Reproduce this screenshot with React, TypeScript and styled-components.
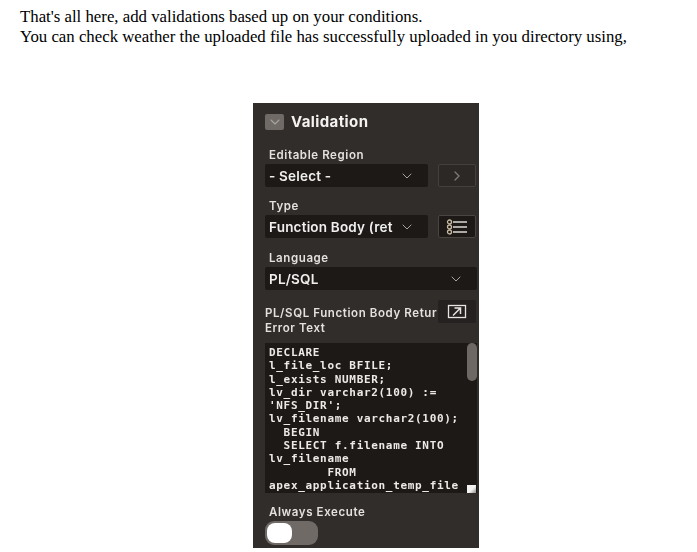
import React from 'react'
import styled, { createGlobalStyle } from 'styled-components'
import { ChevronDown, ChevronRight } from 'lucide-react'

const GlobalStyle = createGlobalStyle`
  html, body {
    margin: 0;
    padding: 0;
    background: #fff;
  }
`

const Page = styled.div`
  width: 697px;
  height: 552px;
  overflow: hidden;
  padding: 7px 0 0 20px;
  box-sizing: border-box;
`

const Intro = styled.p`
  margin: 0;
  font-family: 'Liberation Serif', serif;
  font-size: 16.8px;
  line-height: 20px;
  color: #000;
  white-space: nowrap;
`

const Panel = styled.section`
  width: 226px;
  height: 445px;
  margin: 56px 0 0 233px;
  padding: 11px 2px 0 12px;
  box-sizing: border-box;
  background: #312d2a;
  font-family: 'Inter', sans-serif;
  color: #f1efed;
  filter: blur(0.5px);
`

const Header = styled.header`
  display: flex;
  align-items: center;
  gap: 7px;
  height: 16px;
  margin-bottom: 17px;
`

const Collapse = styled.span`
  display: flex;
  align-items: center;
  justify-content: center;
  width: 19px;
  height: 16px;
  border-radius: 2px;
  background: #6f6a66;
  color: #a8a39f;
`

const Title = styled.h2`
  margin: 0;
  font-size: 15px;
  font-weight: 700;
  line-height: 16px;
  letter-spacing: 0.4px;
  color: #f5f3f1;
`

const Label = styled.label<{ $flush?: boolean }>`
  display: block;
  height: 15px;
  padding-left: ${p => (p.$flush ? 0 : 4)}px;
  font-size: 11.5px;
  font-weight: 600;
  line-height: 17px;
  letter-spacing: 0.6px;
  color: #e4e1de;
`

const Field = styled.div<{ $gap?: number }>`
  margin-bottom: ${p => p.$gap ?? 11}px;
`

const Controls = styled.div`
  display: flex;
  gap: 10px;
  margin-top: 2px;
`

const Select = styled.div<{ $wide?: boolean }>`
  display: flex;
  align-items: center;
  justify-content: space-between;
  width: ${p => (p.$wide ? 212 : 163)}px;
  height: 23px;
  padding: 0 13px 0 4px;
  box-sizing: border-box;
  border-radius: 2px;
  background: #1c1917;
  font-size: 13.5px;
  font-weight: 600;
  letter-spacing: 0.2px;
  color: #f1efed;
  white-space: nowrap;

  svg {
    flex: none;
    color: #a8a39f;
  }
`

const SquareButton = styled.span<{ $dark?: boolean }>`
  display: flex;
  align-items: center;
  justify-content: center;
  width: 38px;
  height: 23px;
  box-sizing: border-box;
  border: 1px solid ${p => (p.$dark ? '#4a4541' : '#45403c')};
  border-radius: 2px;
  background: ${p => (p.$dark ? '#1c1917' : '#2c2825')};
  color: #7d7874;
`

const CodeHeading = styled.div`
  display: flex;
  justify-content: space-between;
  width: 211px;
  height: 43px;
  margin-top: -1px;
`

const CodeLabels = styled.div`
  padding-top: 5px;
  white-space: nowrap;
`

const ExpandButton = styled.span`
  display: flex;
  align-items: center;
  justify-content: center;
  width: 38px;
  height: 23px;
  border-radius: 2px;
  background: #242120;
`

const CodeBox = styled.div`
  position: relative;
  width: 212px;
  height: 150px;
  overflow: hidden;
  background: #1c1917;
  margin-bottom: 11px;
`

const Code = styled.pre`
  margin: 0;
  padding: 3px 0 0 4px;
  font-family: 'DejaVu Sans Mono', monospace;
  font-size: 11px;
  font-weight: 600;
  line-height: 13.3px;
  letter-spacing: 0.68px;
  color: #ece9e6;
`

const ScrollThumb = styled.span`
  position: absolute;
  top: 0;
  right: 0;
  width: 10px;
  height: 38px;
  border-radius: 5px;
  background: #6d6864;
`

const ResizeGrip = styled.span`
  position: absolute;
  right: 1px;
  bottom: 0;
  width: 9px;
  height: 8px;
  background: linear-gradient(135deg, #f4f3f2 55%, #8f8c89 100%);
`

const Toggle = styled.span`
  display: flex;
  align-items: center;
  width: 53px;
  height: 24px;
  margin-top: 2px;
  padding-left: 2px;
  box-sizing: border-box;
  border-radius: 9px;
  background: #6f6a66;
`

const Knob = styled.span`
  width: 25px;
  height: 20px;
  border-radius: 8px;
  background: #fff;
`

const code = `DECLARE
l_file_loc BFILE;
l_exists NUMBER;
lv_dir varchar2(100) :=
'NFS_DIR';
lv_filename varchar2(100);
  BEGIN
  SELECT f.filename INTO
lv_filename
        FROM
apex_application_temp_file`

const App = () => (
  <Page>
    <GlobalStyle />
    <Intro>
      That's all here, add validations based up on your conditions.
      <br />
      You can check weather the uploaded file has successfully uploaded in you directory using,
    </Intro>
    <Panel>
      <Header>
        <Collapse>
          <ChevronDown size={16} strokeWidth={1.6} />
        </Collapse>
        <Title>Validation</Title>
      </Header>
      <Field>
        <Label>Editable Region</Label>
        <Controls>
          <Select>
            <span>- Select -</span>
            <ChevronDown size={16} strokeWidth={1.5} />
          </Select>
          <SquareButton>
            <ChevronRight size={16} />
          </SquareButton>
        </Controls>
      </Field>
      <Field $gap={12}>
        <Label>Type</Label>
        <Controls>
          <Select>
            <span>Function Body (ret</span>
            <ChevronDown size={16} strokeWidth={1.5} />
          </Select>
          <SquareButton $dark>
            <svg width="22" height="16" viewBox="0 0 22 16" fill="none">
              <circle cx="3.500" cy="3" r="2" stroke="#c9b9a0" strokeWidth="1.300" />
              <circle cx="3.500" cy="8" r="2" stroke="#c9b9a0" strokeWidth="1.300" />
              <circle cx="3.500" cy="13" r="2" stroke="#c9b9a0" strokeWidth="1.300" />
              <path d="M7 3h14M7 8h14M7 13h14" stroke="#dcd8d4" strokeWidth="1.400" />
            </svg>
          </SquareButton>
        </Controls>
      </Field>
      <Field>
        <Label>Language</Label>
        <Controls>
          <Select $wide>
            <span>PL/SQL</span>
            <ChevronDown size={16} strokeWidth={1.5} />
          </Select>
        </Controls>
      </Field>
      <CodeHeading>
        <CodeLabels>
          <Label $flush>PL/SQL Function Body Retur</Label>
          <Label $flush>Error Text</Label>
        </CodeLabels>
        <ExpandButton>
          <svg width="20" height="15" viewBox="0 0 20 15" fill="none">
            <rect x="1.500" y="1.500" width="17" height="12" stroke="#e6e3e0" strokeWidth="1.300" />
            <path d="M6 11.500l7-7M7.500 4h6v6" stroke="#e6e3e0" strokeWidth="1.500" />
          </svg>
        </ExpandButton>
      </CodeHeading>
      <CodeBox>
        <Code>{code}</Code>
        <ScrollThumb />
        <ResizeGrip />
      </CodeBox>
      <Label>Always Execute</Label>
      <Toggle>
        <Knob />
      </Toggle>
    </Panel>
  </Page>
)

export default App
